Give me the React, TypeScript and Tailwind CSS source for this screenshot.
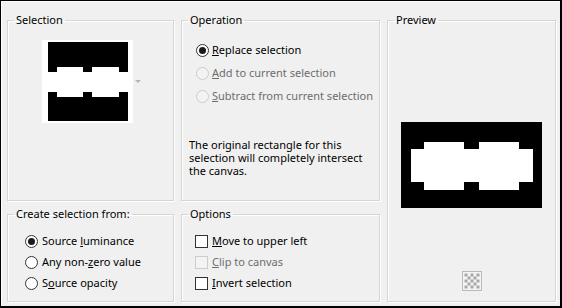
import React from "react";

const FONT = { fontFamily: '"Noto Sans", "Liberation Sans", sans-serif' };

function Radio({ checked, disabled }: { checked?: boolean; disabled?: boolean }) {
  return (
    <span
      className={
        "w-[13px] h-[13px] rounded-full border flex items-center justify-center shrink-0 " +
        (disabled ? "border-[#cccccc] bg-[#f3f3f3]" : "border-[#333333] bg-white")
      }
    >
      {checked && <span className="w-[7px] h-[7px] rounded-full bg-[#1a1a1a]" />}
    </span>
  );
}

function Check({ disabled }: { disabled?: boolean }) {
  return (
    <span
      className={
        "w-[13px] h-[13px] border shrink-0 " +
        (disabled ? "border-[#cccccc] bg-[#f3f3f3]" : "border-[#333333] bg-white")
      }
    />
  );
}

function Box({
  title,
  className,
  children,
}: {
  title: string;
  className?: string;
  children: React.ReactNode;
}) {
  return (
    <fieldset
      className={
        "border border-[#d5d5d5] shadow-[1px_1px_0_#ffffff,inset_1px_1px_0_#ffffff] min-w-0 " +
        (className ?? "")
      }
    >
      <legend className="ml-[6px] px-[2px] text-[11px] leading-[14px] text-black whitespace-nowrap">{title}</legend>
      {children}
    </fieldset>
  );
}

export default function App() {
  return (
    <div
      className="w-[562px] h-[308px] bg-[#f0f0f0] border-t border-l border-r-2 border-b-2 border-black text-[11px] text-black whitespace-nowrap"
      style={FONT}
    >
      <div className="w-full h-full border-t border-l border-white pl-[5px] pt-[11px]">
        <div className="grid grid-cols-[167px_199px_169px] grid-rows-[188px_95px] gap-x-[7px] gap-y-[6px]">
          {/* Selection */}
          <Box title="Selection">
            <div className="flex items-center ml-[34px] mt-[13px]">
              <div className="bg-white pl-[6px] pr-[5px] py-[2px]">
                <svg width="80" height="79" viewBox="0 0 80 79" className="block">
                  <rect x="0" y="0" width="80" height="79" fill="#000" />
                  <rect x="0" y="30" width="80" height="20" fill="#fff" />
                  <rect x="9" y="25" width="26" height="30" fill="#fff" />
                  <rect x="44" y="25" width="27" height="30" fill="#fff" />
                </svg>
              </div>
              <svg width="6" height="4" viewBox="0 0 6 4" className="ml-[2px] block">
                <path d="M0 0 L6 0 L3 3 Z" fill="#b4b4b4" />
              </svg>
            </div>
          </Box>

          {/* Operation */}
          <Box title="Operation">
            <div className="mt-[12px] pl-[14px]">
              <div className="h-[23px] flex items-center gap-[3px]">
                <Radio checked />
                <span>
                  <u>R</u>eplace selection
                </span>
              </div>
              <div className="h-[23px] flex items-center gap-[3px] text-[#6d6d6d]">
                <Radio disabled />
                <span>
                  <u>A</u>dd to current selection
                </span>
              </div>
              <div className="h-[23px] flex items-center gap-[3px] text-[#6d6d6d]">
                <Radio disabled />
                <span>
                  <u>S</u>ubtract from current selection
                </span>
              </div>
            </div>
            <p className="mt-[30px] pl-[7px] leading-[13px]">
              The original rectangle for this
              <br />
              selection will completely intersect
              <br />
              the canvas.
            </p>
          </Box>

          {/* Preview */}
          <Box title="Preview" className="row-span-2">
            <div className="flex flex-col items-center">
              <svg width="141" height="86" viewBox="0 0 141 86" className="block mt-[95px]">
                <rect x="0" y="0" width="141" height="86" fill="#000" />
                <rect x="10" y="27" width="122" height="33" fill="#fff" />
                <rect x="23" y="20" width="40" height="48" fill="#fff" />
                <rect x="78" y="20" width="40" height="48" fill="#fff" />
              </svg>
              <svg width="20" height="20" viewBox="0 0 20 20" className="block mt-[63px]">
                <rect x="0.5" y="0.5" width="19" height="19" fill="#f4f4f4" stroke="#b9b9b9" />
                {[0, 1, 2, 3, 4].map((r) =>
                  [0, 1, 2, 3, 4].map((c) =>
                    (r + c) % 2 === 0 ? (
                      <rect key={`${r}-${c}`} x={2.5 + c * 3} y={2.5 + r * 3} width="3" height="3" fill="#a8a8a8" />
                    ) : null
                  )
                )}
              </svg>
            </div>
          </Box>

          {/* Create selection from */}
          <Box title="Create selection from:">
            <div className="mt-[10px] pl-[17px]">
              <div className="h-[21px] flex items-center gap-[4px]">
                <Radio checked />
                <span>
                  Source <u>l</u>uminance
                </span>
              </div>
              <div className="h-[21px] flex items-center gap-[4px]">
                <Radio />
                <span>
                  Any non-<u>z</u>ero value
                </span>
              </div>
              <div className="h-[21px] flex items-center gap-[4px]">
                <Radio />
                <span>
                  S<u>o</u>urce opacity
                </span>
              </div>
            </div>
          </Box>

          {/* Options */}
          <Box title="Options">
            <div className="mt-[10px] pl-[13px]">
              <div className="h-[21px] flex items-center gap-[4px]">
                <Check />
                <span>
                  <u>M</u>ove to upper left
                </span>
              </div>
              <div className="h-[21px] flex items-center gap-[4px] text-[#6d6d6d]">
                <Check disabled />
                <span>
                  <u>C</u>lip to canvas
                </span>
              </div>
              <div className="h-[21px] flex items-center gap-[4px]">
                <Check />
                <span>
                  <u>I</u>nvert selection
                </span>
              </div>
            </div>
          </Box>
        </div>
      </div>
    </div>
  );
}
